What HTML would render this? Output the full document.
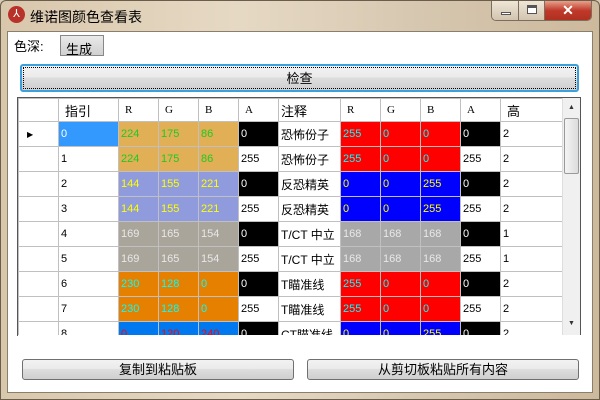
<!DOCTYPE html><html><head><meta charset="utf-8"><style>
*{margin:0;padding:0;box-sizing:border-box}
body{width:600px;height:400px;overflow:hidden;background:#d8cbb4;font-family:"Liberation Sans","WenQuanYi Zen Hei",sans-serif;font-size:12px;position:relative}
.frame{position:absolute;left:0;top:0;width:600px;height:400px;border:1px solid #6b5d4b;border-radius:6px 6px 0 0;background:linear-gradient(90deg,#d9c7ac,#e6d9c4 40%,#d6c7b0 70%,#cdb99c)}
.title{position:absolute;left:30px;top:7px;font-size:14px;color:#000;font-family:"WenQuanYi Zen Hei",sans-serif}
.icon{position:absolute;left:8px;top:6px;width:17px;height:17px;border-radius:50%;background:#b8322a;color:#fff;font-size:11px;text-align:center;line-height:17px}
.client{position:absolute;left:7px;top:31px;width:586px;height:362px;background:#fff;border:1px solid #8a7e6c}
.caps{position:absolute;left:491px;top:1px;width:101px;height:20px;border:1px solid #7a6e5e;border-top:none;border-radius:0 0 5px 5px;overflow:hidden;display:flex}
.caps div{height:19px;border-right:1px solid #7a6e5e;background:linear-gradient(#efe6d8,#d2c4ae);position:relative}
.btn{position:absolute;background:linear-gradient(#f2f2f2 0,#ebebeb 45%,#dddddd 50%,#cfcfcf);border:1px solid #707070;border-radius:3px;text-align:center;font-family:"WenQuanYi Zen Hei",sans-serif;font-size:13px;color:#000}
table{position:absolute;left:18px;top:98px;border-collapse:collapse;table-layout:fixed;background:#fff}
td{height:25px;border:1px solid #c0c0c0;padding-left:2px;white-space:nowrap;overflow:hidden;font-size:11px;font-family:"Liberation Sans","WenQuanYi Zen Hei",sans-serif}
tr.h td{height:23px;font-family:"Liberation Serif","WenQuanYi Zen Hei",serif;font-size:11px;padding-left:6px}
tr.h td.c{font-size:13px;font-family:"WenQuanYi Zen Hei",sans-serif}
td.z{font-family:"WenQuanYi Zen Hei",sans-serif;font-size:12px}
.k{background:#000;color:#fff}
.o{background:#e0af56;color:#22c822}
</style></head><body>
<div class="frame"></div>
<div class="icon">⅄</div>
<div class="title">维诺图颜色查看表</div>
<div class="caps"><div style="width:28px"><span style="position:absolute;left:9px;top:11px;width:10px;height:3px;background:#fff;border:1px solid #555"></span></div><div style="width:26px"><span style="position:absolute;left:8px;top:4px;width:10px;height:9px;border:1px solid #555;border-top-width:3px;background:#fff"></span></div><div style="width:47px;background:linear-gradient(#e8a08a,#c0392b 50%,#b0301f);border:none;color:#fff;font-weight:bold;text-align:center;font-size:14px;line-height:18px">✕</div></div>
<div class="client">
 <div style="position:absolute;left:6px;top:4px;font-size:13px;font-family:'WenQuanYi Zen Hei',sans-serif">色深:</div>
 <div style="position:absolute;left:52px;top:3px;width:44px;height:21px;border:1px solid #888;background:linear-gradient(#eaeaea,#d0d0d0);font-size:13px;padding:3px 0 0 5px;font-family:'WenQuanYi Zen Hei',sans-serif">生成</div>
</div>
<div class="btn" style="left:20px;top:64px;width:559px;height:28px;line-height:25px;border:2px solid #3ca0dc;outline:1px dotted #000;outline-offset:-4px">检查</div>
<div style="position:absolute;left:17px;top:97px;width:564px;height:239px;border:1px solid #555"></div>
<table>
<colgroup><col style="width:40px"><col style="width:60px"><col style="width:40px"><col style="width:40px"><col style="width:40px"><col style="width:40px"><col style="width:62px"><col style="width:40px"><col style="width:40px"><col style="width:40px"><col style="width:40px"><col style="width:62px"></colgroup>
<tr class="h"><td></td><td class="c">指引</td><td>R</td><td>G</td><td>B</td><td>A</td><td class="c" style="padding-left:2px">注释</td><td>R</td><td>G</td><td>B</td><td>A</td><td class="c">高</td></tr>
<tr><td style="padding-left:8px;font-size:8px">▶</td><td style="background:#3399ff;color:#fff">0</td><td class="o">224</td><td class="o">175</td><td class="o">86</td><td class="k">0</td><td class="z">恐怖份子</td><td style="background:#f00;color:#0ff">255</td><td style="background:#f00;color:#0ff">0</td><td style="background:#f00;color:#0ff">0</td><td class="k">0</td><td>2</td></tr>
<tr><td></td><td>1</td><td class="o">224</td><td class="o">175</td><td class="o">86</td><td>255</td><td class="z">恐怖份子</td><td style="background:#f00;color:#0ff">255</td><td style="background:#f00;color:#0ff">0</td><td style="background:#f00;color:#0ff">0</td><td>255</td><td>2</td></tr>
<tr><td></td><td>2</td><td style="background:#909bdd;color:#ff0">144</td><td style="background:#909bdd;color:#ff0">155</td><td style="background:#909bdd;color:#ff0">221</td><td class="k">0</td><td class="z">反恐精英</td><td style="background:#00f;color:#ff0">0</td><td style="background:#00f;color:#ff0">0</td><td style="background:#00f;color:#ff0">255</td><td class="k">0</td><td>2</td></tr>
<tr><td></td><td>3</td><td style="background:#909bdd;color:#ff0">144</td><td style="background:#909bdd;color:#ff0">155</td><td style="background:#909bdd;color:#ff0">221</td><td>255</td><td class="z">反恐精英</td><td style="background:#00f;color:#ff0">0</td><td style="background:#00f;color:#ff0">0</td><td style="background:#00f;color:#ff0">255</td><td>255</td><td>2</td></tr>
<tr><td></td><td>4</td><td style="background:#a9a59a;color:#e8e8e8">169</td><td style="background:#a9a59a;color:#e8e8e8">165</td><td style="background:#a9a59a;color:#e8e8e8">154</td><td class="k">0</td><td class="z">T/CT 中立</td><td style="background:#a8a8a8;color:#e8e8e8">168</td><td style="background:#a8a8a8;color:#e8e8e8">168</td><td style="background:#a8a8a8;color:#e8e8e8">168</td><td class="k">0</td><td>1</td></tr>
<tr><td></td><td>5</td><td style="background:#a9a59a;color:#e8e8e8">169</td><td style="background:#a9a59a;color:#e8e8e8">165</td><td style="background:#a9a59a;color:#e8e8e8">154</td><td>255</td><td class="z">T/CT 中立</td><td style="background:#a8a8a8;color:#e8e8e8">168</td><td style="background:#a8a8a8;color:#e8e8e8">168</td><td style="background:#a8a8a8;color:#e8e8e8">168</td><td>255</td><td>1</td></tr>
<tr><td></td><td>6</td><td style="background:#e68000;color:#0ff">230</td><td style="background:#e68000;color:#0ff">128</td><td style="background:#e68000;color:#0ff">0</td><td class="k">0</td><td class="z">T瞄准线</td><td style="background:#f00;color:#0ff">255</td><td style="background:#f00;color:#0ff">0</td><td style="background:#f00;color:#0ff">0</td><td class="k">0</td><td>2</td></tr>
<tr><td></td><td>7</td><td style="background:#e68000;color:#0ff">230</td><td style="background:#e68000;color:#0ff">128</td><td style="background:#e68000;color:#0ff">0</td><td>255</td><td class="z">T瞄准线</td><td style="background:#f00;color:#0ff">255</td><td style="background:#f00;color:#0ff">0</td><td style="background:#f00;color:#0ff">0</td><td>255</td><td>2</td></tr>
<tr><td></td><td>8</td><td style="background:#0078f0;color:#f00">0</td><td style="background:#0078f0;color:#f00">120</td><td style="background:#0078f0;color:#f00">240</td><td class="k">0</td><td class="z">CT瞄准线</td><td style="background:#00f;color:#ff0">0</td><td style="background:#00f;color:#ff0">0</td><td style="background:#00f;color:#ff0">255</td><td class="k">0</td><td>2</td></tr>
</table>
<div style="position:absolute;left:18px;top:335px;width:564px;height:22px;background:#fff"></div>
<div style="position:absolute;left:562px;top:98px;width:18px;height:237px;background:#f0f0f0;border-left:1px solid #ddd">
 <div style="position:absolute;left:5px;top:6px;font-size:7px;color:#333">▲</div>
 <div style="position:absolute;left:1px;top:20px;width:15px;height:56px;border:1px solid #999;border-radius:2px;background:linear-gradient(90deg,#f4f4f4,#dcdcdc)"></div>
 <div style="position:absolute;left:5px;top:222px;font-size:7px;color:#333">▼</div>
</div>
<div class="btn" style="left:22px;top:359px;width:272px;height:21px;line-height:19px">复制到粘贴板</div>
<div class="btn" style="left:307px;top:359px;width:272px;height:21px;line-height:19px">从剪切板粘贴所有内容</div>
</body></html>
